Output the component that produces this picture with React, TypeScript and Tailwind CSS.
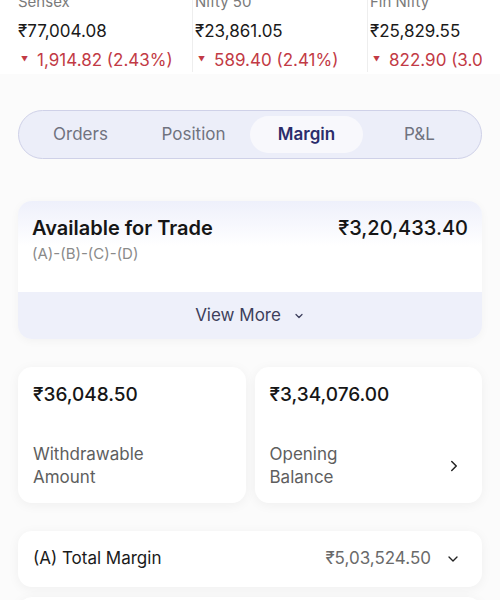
import { ChevronDown, ChevronRight } from "lucide-react";

const tickers = [
  { name: "Sensex", value: "₹77,004.08", change: "1,914.82 (2.43%)" },
  { name: "Nifty 50", value: "₹23,861.05", change: "589.40 (2.41%)" },
  { name: "Fin Nifty", value: "₹25,829.55", change: "822.90 (3.09%)" },
];

const tabs = ["Orders", "Position", "Margin", "P&L"];

export default function App() {
  return (
    <div
      className="w-[500px] h-[600px] overflow-hidden bg-[#fbfbfb]"
      style={{ fontFamily: "Inter, 'Noto Sans', sans-serif" }}
    >
      {/* tickers */}
      <div className="bg-white h-[88px] -mt-[14px] px-[18px]">
        <div className="flex h-full overflow-hidden">
          {tickers.map((t, i) => (
            <div
              key={t.name}
              className={`w-[175px] shrink-0 pt-[6px] h-[86px] ${i < 2 ? "border-r border-[#eeeeee]" : ""} ${i > 0 ? "pl-[2px]" : ""}`}
            >
              <div className="text-[15px] leading-[20px] text-[#7a7a7a]">{t.name}</div>
              <div className="mt-[7px] text-[17px] leading-[24px] text-[#1a1a1a]">{t.value}</div>
              <div className="mt-[5px] flex items-center text-[17px] leading-[24px] text-[#c23a45] whitespace-nowrap">
                <span className="text-[7px] mr-[9px] ml-[3px]">▼</span>
                {t.change}
              </div>
            </div>
          ))}
        </div>
      </div>

      <div className="px-[18px]">
        {/* tabs */}
        <div className="mt-[36px] h-[49px] rounded-full border border-[#cfd1e8] bg-[#eceef9] p-[5px] grid grid-cols-4">
          {tabs.map((t) => (
            <div
              key={t}
              className={`flex items-center justify-center rounded-full text-[17px] ${
                t === "Margin" ? "bg-[#f8f8fc] font-semibold text-[#2b2d6b]" : "text-[#70737f]"
              }`}
            >
              {t}
            </div>
          ))}
        </div>

        {/* available for trade */}
        <div className="mt-[42px] rounded-[14px] overflow-hidden shadow-[0_2px_10px_rgba(0,0,0,0.04)]">
          <div className="h-[91px] bg-gradient-to-b from-[#eef0fb] via-white to-white px-[14px] pt-[14px] flex justify-between">
            <div>
              <div className="text-[20px] leading-[26px] font-semibold text-[#161616]">Available for Trade</div>
              <div className="mt-[3px] text-[15px] leading-[20px] text-[#8a8a8a]">(A)-(B)-(C)-(D)</div>
            </div>
            <div className="text-[20px] leading-[26px] font-medium text-[#161616]">₹3,20,433.40</div>
          </div>
          <div className="h-[47px] bg-[#eef0fa] flex items-center justify-center gap-[12px] text-[17px] text-[#3d3f5c]">
            View More
            <ChevronDown size={12} strokeWidth={2.5} />
          </div>
        </div>

        {/* small cards */}
        <div className="mt-[28px] grid grid-cols-2 gap-[9px]">
          <div className="h-[136px] rounded-[14px] bg-white shadow-[0_2px_12px_rgba(0,0,0,0.05)] px-[15px] pt-[15px] flex flex-col justify-between pb-[14px]">
            <div className="text-[19px] leading-[26px] font-medium text-[#161616]">₹36,048.50</div>
            <div className="text-[17px] leading-[23px] text-[#5e5e5e]">
              Withdrawable
              <br />
              Amount
            </div>
          </div>
          <div className="h-[136px] rounded-[14px] bg-white shadow-[0_2px_12px_rgba(0,0,0,0.05)] px-[15px] pt-[15px] flex flex-col justify-between pb-[14px]">
            <div className="text-[19px] leading-[26px] font-medium text-[#161616]">₹3,34,076.00</div>
            <div className="flex items-center justify-between">
              <div className="text-[17px] leading-[23px] text-[#5e5e5e]">
                Opening
                <br />
                Balance
              </div>
              <ChevronRight size={18} strokeWidth={2} className="text-[#222] mr-[4px]" />
            </div>
          </div>
        </div>

        {/* total margin */}
        <div className="mt-[28px] h-[56px] rounded-[14px] bg-white shadow-[0_2px_12px_rgba(0,0,0,0.05)] px-[15px] flex items-center justify-between">
          <div className="text-[17px] text-[#1a1a1a]">(A) Total Margin</div>
          <div className="flex items-center gap-[14px]">
            <span className="text-[17px] text-[#6a6a6a]">₹5,03,524.50</span>
            <ChevronDown size={16} strokeWidth={2} className="text-[#222] mr-[6px]" />
          </div>
        </div>

        <div className="mt-[10px] h-[56px] rounded-[14px] bg-white shadow-[0_2px_12px_rgba(0,0,0,0.05)]" />
      </div>
    </div>
  );
}
